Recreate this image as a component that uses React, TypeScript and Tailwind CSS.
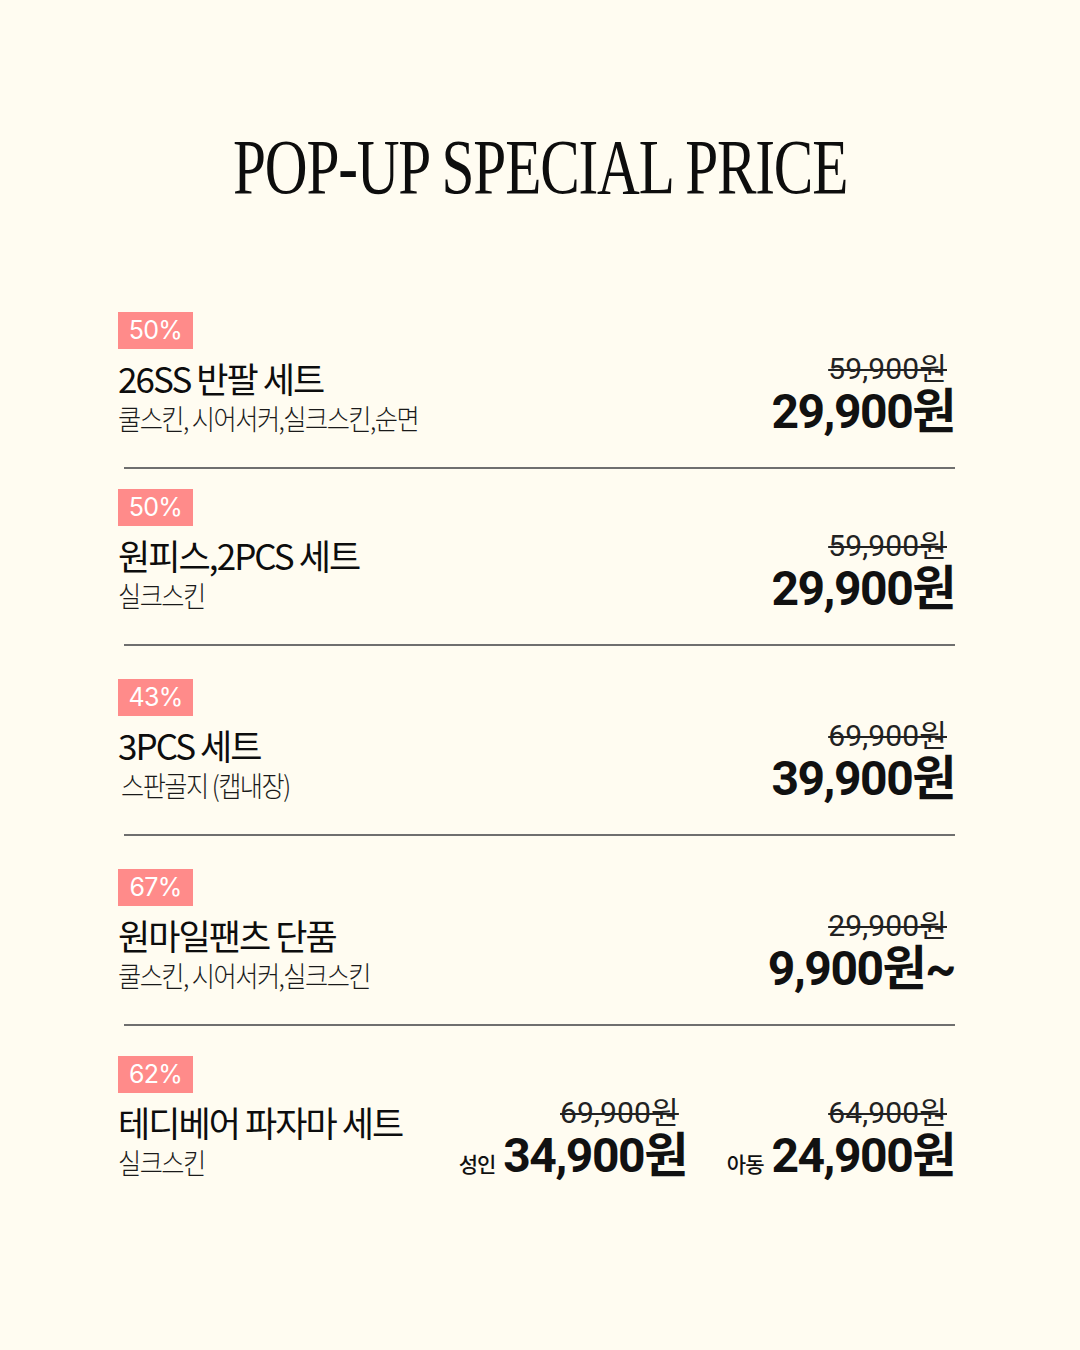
import React from 'react';

interface SaleRow {
  off: string;
  name: string;
  sub: string;
  was: string;
  now: string;
  gap: string;
  subIndent?: string;
}

const rows: SaleRow[] = [
  { off: '50%', name: '26SS 반팔 세트', sub: '쿨스킨, 시어서커,실크스킨,순면', was: '59,900원', now: '29,900원', gap: 'mt-[106px]' },
  { off: '50%', name: '원피스,2PCS 세트', sub: '실크스킨', was: '59,900원', now: '29,900원', gap: 'mt-[20px]' },
  { off: '43%', name: '3PCS 세트', sub: '스판골지 (캡내장)', was: '69,900원', now: '39,900원', gap: 'mt-[33px]', subIndent: 'ml-[3px]' },
  { off: '67%', name: '원마일팬츠 단품', sub: '쿨스킨, 시어서커,실크스킨', was: '29,900원', now: '9,900원~', gap: 'mt-[33px]' },
];

const kr = "font-['Noto_Sans_CJK_KR',sans-serif]";
const num = "font-['Roboto','Noto_Sans_CJK_KR',sans-serif]";

function Badge({ text }: { text: string }) {
  return (
    <div className="flex h-[37px] w-[75px] items-center justify-center bg-[#ff8b8a] text-[25px] leading-none tracking-[-0.03em] text-white font-['Inter',sans-serif]">
      {text}
    </div>
  );
}

function ItemInfo({ row }: { row: Pick<SaleRow, 'off' | 'name' | 'sub' | 'subIndent'> }) {
  return (
    <div className="flex flex-col items-start">
      <Badge text={row.off} />
      <div className={`mt-[9px] h-[40px] whitespace-nowrap text-[35px] leading-[40px] font-normal tracking-[-0.055em] text-[#0d0d0d] ${kr}`}>
        {row.name}
      </div>
      <div className={`mt-[3px] h-[34px] whitespace-nowrap text-[28px] leading-[34px] font-light tracking-[-0.06em] text-[#1a1a1a] ${kr} ${row.subIndent ?? ''}`}>
        <span className="inline-block origin-left scale-x-[0.9]">{row.sub}</span>
      </div>
    </div>
  );
}

function Price({ was, now, label }: { was: string; now: string; label?: string }) {
  return (
    <div className="flex flex-col items-end">
      <div className={`mr-[8px] h-[34px] whitespace-nowrap text-[30px] leading-[34px] tracking-[0.005em] text-[#222] line-through decoration-2 ${num}`}>
        {was}
      </div>
      <div className="flex h-[52px] items-baseline gap-[8px]">
        {label && (
          <span className={`text-[21px] font-medium tracking-[-0.05em] text-[#111] ${kr}`}>{label}</span>
        )}
        <span className={`whitespace-nowrap text-[48px] leading-[52px] font-bold tracking-[-0.03em] text-[#111] ${num}`}>
          {now}
        </span>
      </div>
    </div>
  );
}

export default function App() {
  return (
    <div className="h-[1350px] w-[1080px] bg-[#fffcf1] pt-[128px]">
      <div className="flex justify-center">
        <h1 className="inline-block origin-center scale-x-[0.76] whitespace-nowrap text-[78px] leading-none font-normal tracking-[-0.02em] text-[#0d0d0d] font-['Liberation_Serif',serif]">
          POP-UP SPECIAL PRICE
        </h1>
      </div>

      <div className="ml-[118px] w-[837px]">
        {rows.map((row) => (
          <div key={row.name} className={row.gap}>
            <div className="flex h-[155px] items-start justify-between">
              <ItemInfo row={row} />
              <div className="mt-[40px]">
                <Price was={row.was} now={row.now} />
              </div>
            </div>
            <div className="ml-[6px] h-[2px] bg-[#6f6f6f]" />
          </div>
        ))}

        {/* last row: adult / kids pricing */}
        <div className="mt-[30px] flex items-start justify-between">
          <ItemInfo row={{ off: '62%', name: '테디베어 파자마 세트', sub: '실크스킨' }} />
          <div className="mt-[40px] flex gap-[40px]">
            <Price was="69,900원" now="34,900원" label="성인" />
            <Price was="64,900원" now="24,900원" label="아동" />
          </div>
        </div>
      </div>
    </div>
  );
}
